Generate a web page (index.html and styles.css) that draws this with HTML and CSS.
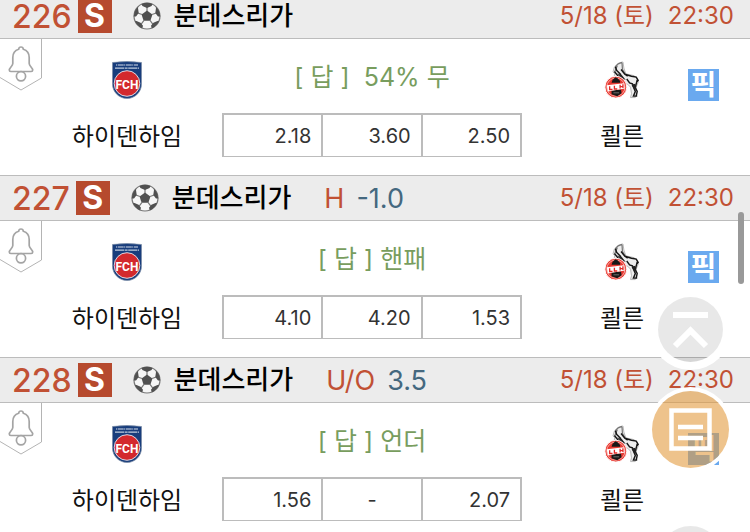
FILE: index.html
```html
<!DOCTYPE html>
<html lang="ko">
<head>
<meta charset="utf-8">
<meta name="viewport" content="width=device-width, initial-scale=1">
<title>분데스리가</title>
<link rel="stylesheet" href="styles.css">
</head>
<body>
<svg class="sprite" aria-hidden="true">
  <symbol id="ball" viewBox="0 0 28 28">
    <circle cx="14" cy="14" r="13" fill="#f6f6f6" stroke="#777" stroke-width="1.200"/>
    <path d="M14 8.500l5.400 4-2 6.300h-6.800l-2-6.300z" fill="#505050"/>
    <path d="M14 9V4M19 12.500l5-1.800M17 18.300l3.200 4.400M11 18.300l-3.200 4.400M9 12.500l-5-1.800" stroke="#777" stroke-width="1.200"/>
    <path d="M8.500 1.900Q14-.4 19.500 1.900L18.600 4 14 6 9.400 4zM22.500 4.200Q26.800 8 27.300 14.500L25 14.500 22.300 11 23 6zM26.300 18.800Q23.800 24.400 18.800 26.400L18 23.800 20.400 20.700 24.500 19zM9.200 26.400Q4.200 24.400 1.700 18.800L3.500 19 7.600 20.700 10 23.800zM.7 14.500Q1.200 8 5.500 4.200L5 6 5.700 11 3 14.500z" fill="#505050"/>
  </symbol>
  <symbol id="bell" viewBox="0 0 42 52">
    <path d="M41.500 0v39L21 51 0 38.500" fill="none" stroke="#b4b4b4"/>
    <path d="M21 8c-1.300 0-2.200.8-2.300 2.200-4 1.200-5.900 4.300-5.900 8.300v6c0 2.500-3.500 4.300-3.500 6.500 0 1 .6 1.500 1.500 1.500h20.400c.9 0 1.500-.5 1.500-1.500 0-2.200-3.500-4-3.500-6.500v-6c0-4-1.900-7.100-5.900-8.300-.1-1.400-1-2.200-2.300-2.200z" fill="none" stroke="#a4a4a4" stroke-width="1.700"/>
    <circle cx="21" cy="37.300" r="4.600" fill="#fff" stroke="#a4a4a4" stroke-width="1.700"/>
  </symbol>
  <symbol id="fch" viewBox="0 0 30 38">
    <path d="M.5 1.500Q15-.5 29.500 1.500V23C29.500 31 23 37.500 15 37.500S.5 31 .5 23z" fill="#183d7c" stroke="#7a8ba5" stroke-width=".7"/>
    <path d="M4 4h22" stroke="#d5deea" stroke-width="1.100" stroke-dasharray="1 .7 6 .4"/>
    <path d="M3 7.200h24" stroke="#c0cddd" stroke-width="1.200" stroke-dasharray="9 .6 3 .6"/>
    <circle cx="15" cy="22.500" r="12.800" fill="#d3292d" stroke="#e5e9f2" stroke-width=".9"/>
    <text x="15" y="27.500" text-anchor="middle" class="crest-text">FCH</text>
  </symbol>
  <symbol id="koeln" viewBox="0 0 38 40">
    <path d="M20 1l-5 1.500-4 4-1.500 5 2 2-1.500 5 9 3 6 3 3 3 1 7-1 4h5l1-4-1-5 3-7-1-4-3-3-9-2-2-6z" fill="#eee" stroke="#b5b5b5"/>
    <path d="M19 1.500l-4 1.500-3 3M14 5l-2.500 6M19 2l.5 7 3 5" fill="none" stroke="#777" stroke-width="1.300"/>
    <path d="M12 6l1.500 4 4 4 1 5M11 11l4 5 6 4M18 9l4 5 3 2M22 14l7 2 5 1 2 3.500-1 1M24 19l3 4 3 1 2 4M35 20l-2 8 2 4-1 5M30 25l3 7-2 5h4" fill="none" stroke="#161616" stroke-width="1.500"/>
    <path d="M14 13l5 2 4 5-5-2zM29 25l4-1 1 5-2 1z" fill="#222"/>
    <circle cx="12.500" cy="27.500" r="11.500" fill="#e83a32" stroke="#fff"/>
    <circle cx="12.500" cy="27.500" r="9.600" fill="none" stroke="#ffd5d0" stroke-width=".7"/>
    <path d="M8 23l1-3 3-3 2 1 3 3v2zM8 31l10-1 .500 4-4.500 3-6-2z" fill="#181818"/>
    <path d="M3 25.500l18-2 1 5.500-18 3z" fill="#fff"/>
    <path d="M6 26.500v3.500h3M11 26v3.500h3M17 25v4M20 24.500v4M17 27h3" fill="none" stroke="#e22b29" stroke-width="1.400"/>
    <path d="M10 33.500h6" stroke="#999" stroke-width=".7"/>
  </symbol>
</svg>

<main class="matches">
  <article class="match">
    <header class="match-head">
      <span class="number">226</span><span class="type">S</span>
      <svg class="ball"><use href="#ball"/></svg>
      <h2 class="league">분데스리가</h2>
      <time class="date"><span>5/18 (토)</span><span>22:30</span></time>
    </header>
    <div class="match-body">
      <button class="alarm" aria-label="알림"><svg><use href="#bell"/></svg></button>
      <svg class="crest"><use href="#fch"/></svg>
      <p class="answer">[ 답 ]&nbsp; 54% 무</p>
      <svg class="crest away"><use href="#koeln"/></svg>
      <span class="team">하이덴하임</span>
      <table class="odds"><tr><td>2.18</td><td>3.60</td><td>2.50</td></tr></table>
      <span class="team">쾰른</span>
      <button class="pick">픽</button>
    </div>
  </article>

  <article class="match">
    <header class="match-head">
      <span class="number">227</span><span class="type">S</span>
      <svg class="ball"><use href="#ball"/></svg>
      <h2 class="league">분데스리가</h2>
      <p class="line"><span>H</span><b>-1.0</b></p>
      <time class="date"><span>5/18 (토)</span><span>22:30</span></time>
    </header>
    <div class="match-body">
      <button class="alarm" aria-label="알림"><svg><use href="#bell"/></svg></button>
      <svg class="crest"><use href="#fch"/></svg>
      <p class="answer">[ 답 ] 핸패</p>
      <svg class="crest away"><use href="#koeln"/></svg>
      <span class="team">하이덴하임</span>
      <table class="odds"><tr><td>4.10</td><td>4.20</td><td>1.53</td></tr></table>
      <span class="team">쾰른</span>
      <button class="pick">픽</button>
    </div>
  </article>

  <article class="match">
    <header class="match-head">
      <span class="number">228</span><span class="type">S</span>
      <svg class="ball"><use href="#ball"/></svg>
      <h2 class="league">분데스리가</h2>
      <p class="line"><span>U/O</span><b>3.5</b></p>
      <time class="date"><span>5/18 (토)</span><span>22:30</span></time>
    </header>
    <div class="match-body">
      <button class="alarm" aria-label="알림"><svg><use href="#bell"/></svg></button>
      <svg class="crest"><use href="#fch"/></svg>
      <p class="answer">[ 답 ] 언더</p>
      <svg class="crest away"><use href="#koeln"/></svg>
      <span class="team">하이덴하임</span>
      <table class="odds"><tr><td>1.56</td><td class="none">-</td><td>2.07</td></tr></table>
      <span class="team">쾰른</span>
      <button class="pick">픽</button>
    </div>
  </article>
</main>

<nav class="floating">
  <button class="float-btn" aria-label="맨 위로">
    <svg viewBox="0 0 65 65"><path d="M15 18h35M17 49l15.500-15.500L48 49" fill="none" stroke="#fff" stroke-width="6"/></svg>
  </button>
  <button class="float-btn slip" aria-label="목록">
    <svg viewBox="0 0 77 77"><path d="M19.500 19.500h38v38h-38zM26 36h25M26 47h25" fill="none" stroke="#fff" stroke-width="4.500"/></svg>
  </button>
  <button class="float-btn" aria-label="맨 아래로">
    <svg viewBox="0 0 65 65"><path d="M15 47h35M17 16l15.500 15.500L48 16" fill="none" stroke="#fff" stroke-width="6"/></svg>
  </button>
</nav>
<div class="scroll-thumb"></div>
</body>
</html>
```
FILE: styles.css
```css
* {
  box-sizing: border-box;
}

body {
  margin: 0;
  overflow: hidden;
  background: #fff;
  color: #111;
  font-family: Inter, "Noto Sans CJK KR", sans-serif;
}

button {
  padding: 0;
  border: 0;
  background: none;
  font: inherit;
  cursor: pointer;
}

h2,
p {
  margin: 0;
}

.sprite {
  position: absolute;
  width: 0;
  height: 0;
}

/* The list opens slightly scrolled. */
.matches {
  margin-top: -7px;
}

.match-head {
  display: flex;
  align-items: center;
  height: 46px;
  padding: 0 16px 0 12px;
  border-top: 1px solid #bcbcbc;
  border-bottom: 1px solid #bcbcbc;
  background: #ececec;
  white-space: nowrap;
}

.number {
  color: #c15134;
  font-size: 32px;
  font-weight: 500;
}

.type {
  width: 34px;
  height: 34px;
  margin-left: 6px;
  background: #b64a2e;
  color: #fff;
  font-size: 32px;
  font-weight: 700;
  line-height: 34px;
  text-align: center;
}

.ball {
  width: 28px;
  height: 28px;
  margin: 0 13px 0 21px;
}

.league {
  color: #000;
  font-size: 26px;
  font-weight: 500;
  line-height: 40px;
}

.line {
  display: flex;
  gap: 12px;
  margin-left: 33px;
  color: #c15134;
  font-size: 27px;
}

.line b {
  color: #44687f;
  font-weight: 400;
}

.date {
  display: flex;
  align-items: baseline;
  gap: 14px;
  margin-left: auto;
  color: #c15134;
  font-size: 24px;
  line-height: 32px;
}

.match-body {
  position: relative;
  display: grid;
  grid-template-columns: 190fr 300fr 200fr;
  grid-template-rows: 38px 44px;
  row-gap: 14px;
  align-items: center;
  justify-items: center;
  padding: 22px 28px 18px 32px;
}

.alarm {
  position: absolute;
  top: 0;
  left: 0;
  width: 42px;
  height: 52px;
}

.alarm svg {
  display: block;
  width: 42px;
  height: 52px;
}

.crest {
  width: 30px;
  height: 38px;
}

.crest.away {
  width: 38px;
}

.crest-text {
  fill: #fff;
  font-family: Roboto, sans-serif;
  font-size: 12px;
  font-weight: 700;
}

.answer {
  padding-bottom: 6px;
  color: #789d5e;
  font-size: 25px;
  line-height: 32px;
}

.team {
  padding-top: 4px;
  font-size: 24px;
  line-height: 36px;
}

.odds {
  width: 100%;
  height: 44px;
  border-collapse: collapse;
  table-layout: fixed;
}

.odds td {
  padding: 0 10px 0 0;
  border: 2px solid #bcbcbc;
  border-bottom-width: 1px;
  color: #333;
  font-size: 20px;
  text-align: right;
}

.odds .none {
  padding: 0;
  text-align: center;
}

.pick {
  position: absolute;
  top: 30px;
  right: 31px;
  width: 31px;
  height: 32px;
  background: #6aa9ef;
  color: #fff;
  font-size: 28px;
  font-weight: 700;
  line-height: 32px;
}

.floating {
  position: fixed;
  top: 297px;
  right: 21px;
  display: flex;
  flex-direction: column;
  align-items: center;
}

.float-btn {
  width: 65px;
  height: 65px;
  border-radius: 50%;
  background: rgba(0, 0, 0, 0.09);
  box-shadow: 0 0 0 8px #fff;
}

.float-btn svg {
  display: block;
}

.float-btn.slip {
  width: 77px;
  height: 77px;
  margin: 29px 0 58px;
  background: rgba(226, 153, 60, 0.59);
  box-shadow: 0 0 0 4px #fff;
}

.scroll-thumb {
  position: fixed;
  top: 212px;
  right: 6px;
  width: 6px;
  height: 72px;
  border-radius: 3px;
  background: #999;
}
```
